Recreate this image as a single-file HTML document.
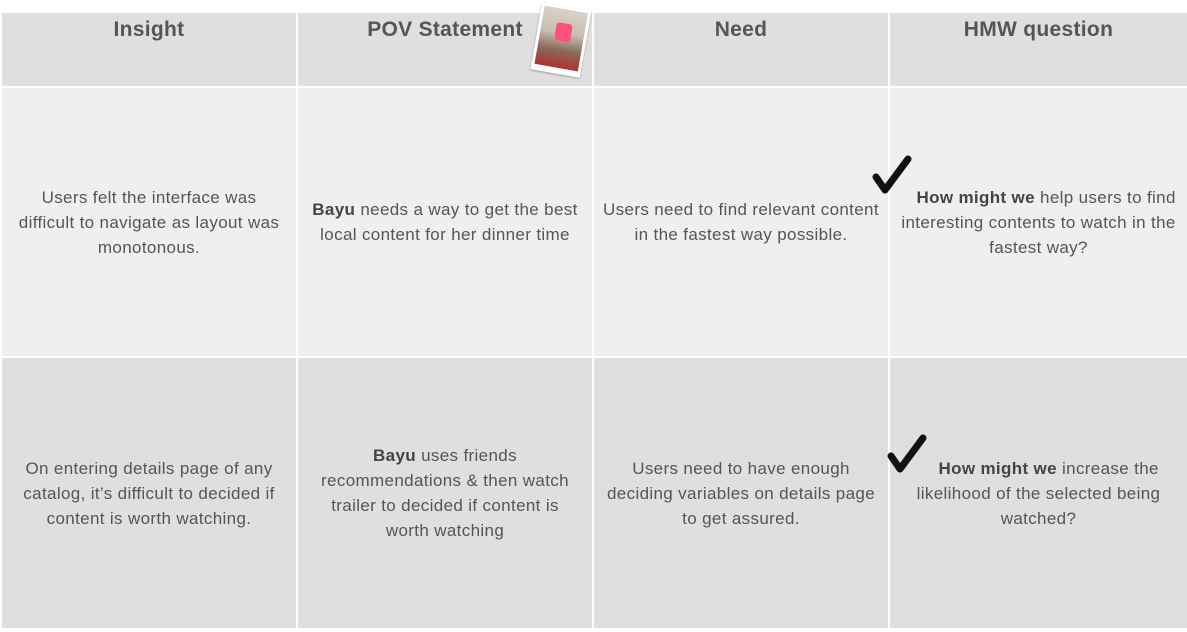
<!DOCTYPE html>
<html><head><style>
body{margin:0;width:1187px;height:632px;background:#fff;position:relative;overflow:hidden;font-family:"Liberation Sans",sans-serif;color:#555}
.c{position:absolute;display:flex;align-items:center;justify-content:center;text-align:center;font-size:17px;line-height:25px;letter-spacing:0.35px;box-sizing:border-box;padding:0;white-space:nowrap}
.h{background:#dfdfdf;font-size:21px;font-weight:bold;align-items:flex-start;padding-top:4px;color:#555;letter-spacing:0.3px}
.r1{background:#efefef}.r2{background:#dfdfdf}
b{color:#444}
</style></head><body>
<div class="c h" style="left:2px;top:13px;width:294px;height:73px">Insight</div>
<div class="c h" style="left:298px;top:13px;width:294px;height:73px">POV Statement</div>
<div class="c h" style="left:594px;top:13px;width:294px;height:73px">Need</div>
<div class="c h" style="left:890px;top:13px;width:297px;height:73px">HMW question</div>
<div style="position:absolute;left:536px;top:6px;width:50px;height:68px;background:#fff;transform:rotate(10deg);box-shadow:0 1px 2px #999">
<div style="position:absolute;left:3px;top:3px;right:3px;bottom:6px;background:linear-gradient(#d8d2c8 0,#c9bfb2 40%,#8a6a5a 70%,#b0302f 100%)">
<div style="position:absolute;left:15px;top:14px;width:16px;height:18px;background:#ff4f7c;border-radius:3px"></div></div></div>

<div class="c r1" style="left:2px;top:88px;width:294px;height:268px"><span>Users felt the interface was<br>difficult to navigate as layout was<br>monotonous.</span></div>
<div class="c r1" style="left:298px;top:88px;width:294px;height:268px"><span><b>Bayu</b> needs a way to get the best<br>local content for her dinner time</span></div>
<div class="c r1" style="left:594px;top:88px;width:294px;height:268px"><span>Users need to find relevant content<br>in the fastest way possible.</span></div>
<div class="c r1" style="left:890px;top:88px;width:297px;height:268px"><span>&nbsp;&nbsp;&nbsp;<b>How might we</b> help users to find<br>interesting contents to watch in the<br>fastest way?</span></div>

<div class="c r2" style="left:2px;top:358px;width:294px;height:270px"><span>On entering details page of any<br>catalog, it’s difficult to decided if<br>content is worth watching.</span></div>
<div class="c r2" style="left:298px;top:358px;width:294px;height:270px"><span><b>Bayu</b> uses friends<br>recommendations &amp; then watch<br>trailer to decided if content is<br>worth watching</span></div>
<div class="c r2" style="left:594px;top:358px;width:294px;height:270px"><span>Users need to have enough<br>deciding variables on details page<br>to get assured.</span></div>
<div class="c r2" style="left:890px;top:358px;width:297px;height:270px"><span>&nbsp;&nbsp;&nbsp;&nbsp;<b>How might we</b> increase the<br>likelihood of the selected being<br>watched?</span></div>

<svg style="position:absolute;left:870px;top:155px" width="44" height="42" viewBox="0 0 44 42"><path d="M6 22 L15 35 L38 4" fill="none" stroke="#111" stroke-width="7" stroke-linecap="round" stroke-linejoin="round"/></svg>
<svg style="position:absolute;left:885px;top:434px" width="44" height="42" viewBox="0 0 44 42"><path d="M6 22 L15 35 L38 4" fill="none" stroke="#111" stroke-width="7" stroke-linecap="round" stroke-linejoin="round"/></svg>
</body></html>
